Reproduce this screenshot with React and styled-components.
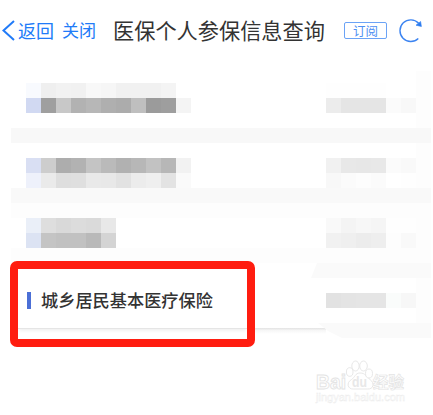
import styled, { createGlobalStyle } from 'styled-components';

const GlobalStyle = createGlobalStyle`
  * {
    box-sizing: border-box;
  }

  body {
    margin: 0;
    background: #fff;
    font-family: "Noto Sans CJK SC", sans-serif;
    overflow: hidden;
  }
`;

const Page = styled.div`
  position: relative;
  width: 433px;
  height: 415px;
  overflow: hidden;
`;

const Header = styled.header`
  display: flex;
  align-items: center;
  height: 61px;
  padding-left: 2px;
  color: #217bf8;
  white-space: nowrap;

  svg {
    flex: none;
  }
`;

const NavLink = styled.span`
  width: ${(props) => props.$width}px;
  margin-left: ${(props) => props.$gap}px;
  padding-bottom: 2px;
  font-size: ${(props) => props.$size}px;
  line-height: 24px;
`;

const Title = styled.h1`
  width: 213px;
  margin: 0 0 0 16px;
  padding-bottom: 2px;
  color: #333;
  font-size: 21.2px;
  font-weight: 400;
  line-height: 30px;
`;

const Subscribe = styled.button`
  width: 43px;
  height: 17px;
  margin: 0 11px 0 18px;
  padding: 0;
  border: 1px solid #6ba3f6;
  border-radius: 2px;
  background: none;
  color: #4e8ff3;
  font-family: inherit;
  font-size: 12.5px;
  line-height: 14px;
`;

const List = styled.main`
  width: 420px;
  margin: 10px 0 0 11px;
  border-right: 15px solid #fdfdfd;
`;

const Row = styled.section`
  display: flex;
  justify-content: space-between;
  height: ${(props) => props.$height}px;
  padding: ${(props) => props.$top}px 0 0 15px;
`;

const Band = styled.div`
  width: 420px;
  height: 15px;
  background: ${(props) => props.$color || '#f9f9f9'};
`;

const Mosaic = styled.div`
  display: grid;
  grid-template-columns: repeat(${(props) => props.$columns}, 15px);
  grid-auto-rows: 15px;
  align-content: start;
`;

const Tile = styled.span`
  background: ${(props) => props.$color};
`;

const ActiveRow = styled.section`
  display: flex;
  align-items: flex-start;
  height: 75px;
`;

const Highlight = styled.div`
  flex: none;
  width: 245px;
  height: 86px;
  margin: -2px 0 0 -1px;
  border: 8px solid #ff1d10;
  border-radius: 7px;
  overflow: hidden;
`;

const Insurance = styled.div`
  display: flex;
  align-items: center;
  height: 60px;
  padding: 3px 0 0 9px;
  border-bottom: 1px solid #e5e5e5;
  box-shadow: 0 3px 3px -1px #f1f1f1;
`;

const Marker = styled.i`
  width: 4px;
  height: 17px;
  margin-right: 10px;
  background: #4b6fd6;
`;

const Name = styled.span`
  color: #333;
  font-size: 17.2px;
  font-weight: 500;
  line-height: 24px;
  white-space: nowrap;
`;

const Side = styled.div`
  display: flex;
  flex: 1;
  flex-direction: column;
  align-items: flex-end;
  height: 75px;
`;

const SideBand = styled.div`
  flex: none;
  width: ${(props) => props.$width}px;
  height: 15px;
  margin-right: -15px;
  background: #fafafa;
  clip-path: ${(props) => props.$clip};
`;

const Details = styled.div`
  display: flex;
  justify-content: flex-end;
  width: 100%;
  height: 45px;
  padding-top: 15px;
`;

const Divider = styled.div`
  flex: none;
  align-self: flex-start;
  width: 71px;
  height: 6px;
  margin-top: -10px;
  background: linear-gradient(#e5e5e5 0, #e8e8e8 1px, #f5f5f5 2px, #fff 6px);
`;

const Watermark = styled.svg`
  position: absolute;
  left: 312px;
  top: 356px;
  font-family: "Liberation Sans", "Noto Sans CJK SC", sans-serif;
`;

const firstRow = [
  '#f8fafe', '#efefef', '#f2f2f2', '#f1f1f1', '#f8f8f8', '#f6f6f6', '#f1f1f1', '#f1f1f1', '#f1f1f1', '#f4f4f4', '#fff',
  '#d1d9f2', '#9f9f9f', '#c8c8c8', '#b2b2b2', '#b7b7b7', '#afafaf', '#acacac', '#bfbfbf', '#9b9b9b', '#9e9e9e', '#f4f4f4',
];

const secondRow = [
  '#d9dff3', '#cdcdcd', '#adadad', '#b2b2b2', '#c4c4c4', '#bababa', '#b1b1b1', '#b7b7b7', '#c2c2c2', '#b7b7b7', '#f2f2f2',
  '#eef1fb', '#eaeaea', '#dedede', '#dfdfdf', '#e9e9e9', '#e8e8e8', '#e2e2e2', '#ececec', '#efefef', '#e3e3e3', '#fafafa',
];

const thirdRow = [
  '#eaeff8', '#dedede', '#d9d9d9', '#dcdcdc', '#dadada', '#e8e8e8',
  '#dce3f3', '#c4c4c4', '#c1c1c1', '#c1c1c1', '#b9b9b9', '#d4d4d4',
];

const firstStatus = [
  '#fefefe', '#fefefe', '#fefefe', '#fefefe', '#fff', '#fff',
  '#ececec', '#e5e5e5', '#e5e5e5', '#e5e5e5', '#fbfbfb', '#f8f8f8',
];

const secondStatus = [
  '#f1f1f1', '#e8e8e8', '#e7e7e7', '#e8e8e8', '#fbfbfb', '#f9f9f9',
  '#f8f8f8', '#fbfbfb', '#fdfdfd', '#fbfbfb', '#fff', '#fefefe',
];

const thirdStatus = [
  '#f9f9f9', '#f4f4f4', '#f7f7f7', '#f5f5f5', '#fefefe', '#fefefe',
  '#f1f1f1', '#efefef', '#ececec', '#eeeeee', '#fdfdfd', '#f9f9f9',
];

const activeStatus = ['#e2e2e2', '#e4e4e4', '#e5e5e5', '#e5e5e5', '#fafcfb', '#f7f7f7'];

function Tiles({ colors, columns }) {
  return (
    <Mosaic $columns={columns}>
      {colors.map((color, index) => (
        <Tile key={index} $color={color} />
      ))}
    </Mosaic>
  );
}

function BackIcon() {
  return (
    <svg width="13" height="22" viewBox="0 0 13 22" fill="none" stroke="#217bf8" strokeWidth="2">
      <path d="M12 1 1.5 10.5 12 20" />
    </svg>
  );
}

function RefreshIcon() {
  return (
    <svg width="26" height="26" viewBox="0 0 26 26" fill="none" stroke="#3c84f1" strokeWidth="1.4">
      <path d="M20.3 20.4A10.8 10.8 0 1 1 20.6 5.2" />
      <path d="m18 7.2 4.6-3.7.8 5Z" fill="#2c7cf0" stroke="#2c7cf0" strokeWidth="0.6" />
    </svg>
  );
}

function BaiduMark() {
  return (
    <Watermark width="96" height="52" viewBox="0 0 96 52" fill="#fff" stroke="#e4e4e4" strokeWidth="0.9">
      <path d="M48 17c-5 0-5 4.500-8.500 6.500-5.500 3-4 10 2 9.500h14c6 .5 7.500-6 2.500-9.500-4-3-4.500-6.500-10-6.500Z" />
      <ellipse cx="37.700" cy="16" rx="3.300" ry="4.300" />
      <ellipse cx="43.500" cy="10" rx="3.700" ry="5" />
      <ellipse cx="51.500" cy="10" rx="3.800" ry="5" />
      <ellipse cx="57" cy="17.500" rx="3.500" ry="4.500" />
      <text x="4" y="33" fontSize="20" fontWeight="700" textLength="30" lengthAdjust="spacingAndGlyphs">Bai</text>
      <text x="40" y="31" fontSize="14" fontWeight="700" fill="#e8e8e8" stroke="none" textLength="15" lengthAdjust="spacingAndGlyphs">du</text>
      <text x="61" y="31.5" fontSize="15.5" fontWeight="700" strokeWidth="0.7">经验</text>
      <text x="4" y="45" fontSize="10.5" strokeWidth="0.4" stroke="#ebebeb" textLength="89" lengthAdjust="spacingAndGlyphs">jingyan.baidu.com</text>
    </Watermark>
  );
}

export default function App() {
  return (
    <Page>
      <GlobalStyle />
      <Header>
        <BackIcon />
        <NavLink $size={18} $width={37} $gap={3}>返回</NavLink>
        <NavLink $size={17} $width={35} $gap={7}>关闭</NavLink>
        <Title>医保个人参保信息查询</Title>
        <Subscribe>订阅</Subscribe>
        <RefreshIcon />
      </Header>

      <List>
        <Row $height={57} $top={12}>
          <Tiles colors={firstRow} columns={11} />
          <Tiles colors={firstStatus} columns={6} />
        </Row>
        <Band $color="#f8f8f8" />
        <Row $height={45} $top={15}>
          <Tiles colors={secondRow} columns={11} />
          <Tiles colors={secondStatus} columns={6} />
        </Row>
        <Band />
        <Band $color="#fdfdfd" />
        <Row $height={30} $top={0}>
          <Tiles colors={thirdRow} columns={6} />
          <Tiles colors={thirdStatus} columns={6} />
        </Row>
        <Band $color="#fdfdfd" />
        <ActiveRow>
          <Highlight>
            <Insurance>
              <Marker />
              <Name>城乡居民基本医疗保险</Name>
            </Insurance>
          </Highlight>
          <Side>
            <SideBand $width={120} $clip="polygon(6px 0, 100% 0, 100% 100%, 0 100%)" />
            <Details>
              <Tiles colors={activeStatus} columns={6} />
            </Details>
            <SideBand $width={113} $clip="polygon(0 0, 100% 0, 100% 100%, 24px 100%, 10px 8px)" />
            <Divider />
          </Side>
        </ActiveRow>
      </List>
      <BaiduMark />
    </Page>
  );
}
